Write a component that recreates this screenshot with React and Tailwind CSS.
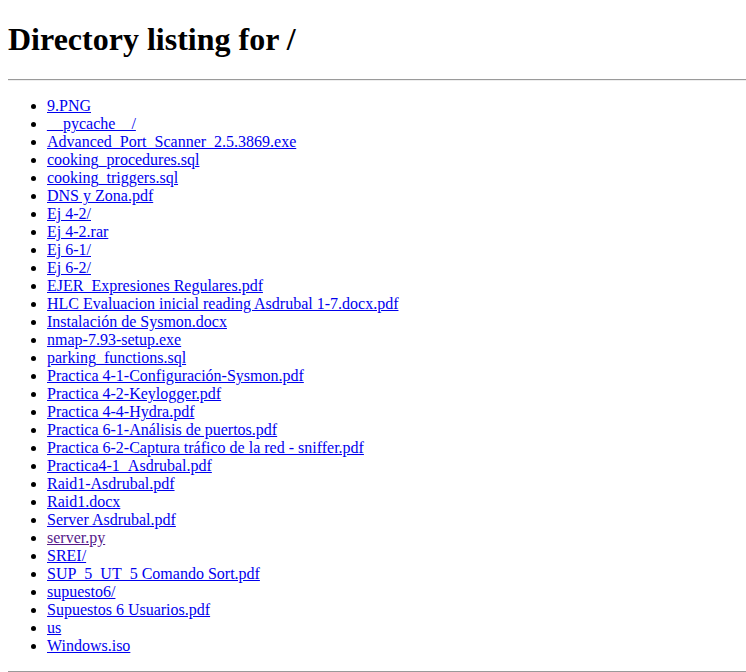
const FILES = [
  '9.PNG',
  '__pycache__/',
  'Advanced_Port_Scanner_2.5.3869.exe',
  'cooking_procedures.sql',
  'cooking_triggers.sql',
  'DNS y Zona.pdf',
  'Ej 4-2/',
  'Ej 4-2.rar',
  'Ej 6-1/',
  'Ej 6-2/',
  'EJER_Expresiones Regulares.pdf',
  'HLC Evaluacion inicial reading Asdrubal 1-7.docx.pdf',
  'Instalación de Sysmon.docx',
  'nmap-7.93-setup.exe',
  'parking_functions.sql',
  'Practica 4-1-Configuración-Sysmon.pdf',
  'Practica 4-2-Keylogger.pdf',
  'Practica 4-4-Hydra.pdf',
  'Practica 6-1-Análisis de puertos.pdf',
  'Practica 6-2-Captura tráfico de la red - sniffer.pdf',
  'Practica4-1_Asdrubal.pdf',
  'Raid1-Asdrubal.pdf',
  'Raid1.docx',
  'Server Asdrubal.pdf',
  'server.py',
  'SREI/',
  'SUP_5_UT_5 Comando Sort.pdf',
  'supuesto6/',
  'Supuestos 6 Usuarios.pdf',
  'us',
  'Windows.iso',
]

const VISITED = ['server.py']

function Rule() {
  return <div className="h-[2px] border-t border-b border-t-[#9a9a9a] border-b-[#eeeeee]" />
}

export default function App() {
  return (
    <div className="min-h-[672px] bg-white pl-2 pt-[21px] font-['Liberation_Serif','Times_New_Roman',serif] text-black">
      <h1 className="text-[32px] font-bold leading-[37px] mb-[21px]">Directory listing for /</h1>
      <Rule />
      <ul className="list-disc pl-[39px] my-4 text-base leading-[18px]">
        {FILES.map(name => (
          <li key={name}>
            <a
              href="#"
              className={'underline ' + (VISITED.includes(name) ? 'text-[#551a8b]' : 'text-[#0000ee]')}
            >
              {name}
            </a>
          </li>
        ))}
      </ul>
      <Rule />
    </div>
  )
}
